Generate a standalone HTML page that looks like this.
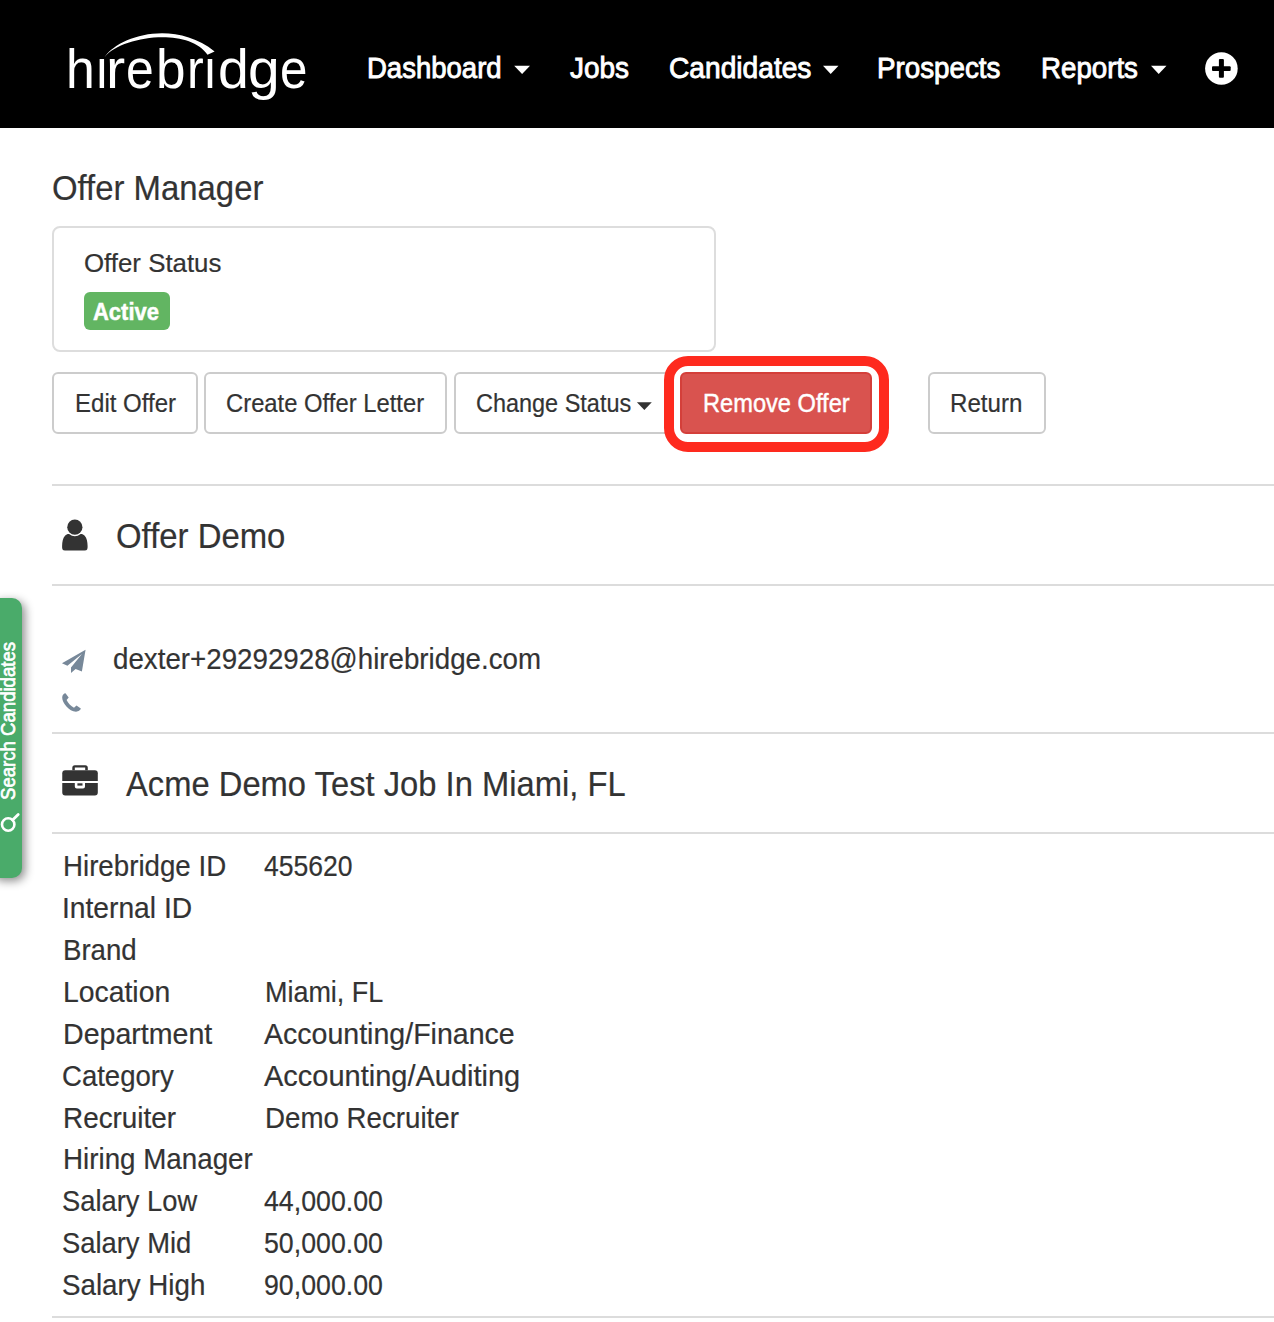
<!DOCTYPE html>
<html>
<head>
<meta charset="utf-8">
<title>Offer Manager</title>
<style>
html,body{margin:0;padding:0;background:#fff;width:1274px;height:1322px;overflow:hidden;position:relative;font-family:"Liberation Sans",sans-serif;}
.t{position:absolute;line-height:1;white-space:nowrap;transform-origin:0 0;}
.nav{position:absolute;left:0;top:0;width:1274px;height:128px;background:#000;}
.hr{position:absolute;left:52px;width:1222px;height:2px;background:#dcdcdc;}
.box{position:absolute;box-sizing:border-box;}
svg{position:absolute;overflow:visible;}
</style>
</head>
<body>
<div class="nav"></div>
<!-- logo -->
<div class="t" style="left:65.68px;top:42.00px;font-size:55px;color:#fff;transform:scaleX(0.9400)">h</div>
<div class="t" style="left:94.70px;top:42.00px;font-size:55px;color:#fff;transform:scaleX(0.9000)">&#305;</div>
<div class="t" style="left:106.46px;top:42.00px;font-size:55px;color:#fff;transform:scaleX(1.0467)">r</div>
<div class="t" style="left:125.99px;top:42.00px;font-size:55px;color:#fff;transform:scaleX(0.9074)">e</div>
<div class="t" style="left:155.70px;top:42.00px;font-size:55px;color:#fff;transform:scaleX(0.9654)">b</div>
<div class="t" style="left:186.56px;top:42.00px;font-size:55px;color:#fff;transform:scaleX(0.9133)">r</div>
<div class="t" style="left:203.42px;top:42.00px;font-size:55px;color:#fff;transform:scaleX(0.9167)">&#305;</div>
<div class="t" style="left:217.58px;top:42.00px;font-size:55px;color:#fff;transform:scaleX(1.0080)">d</div>
<div class="t" style="left:248.23px;top:42.00px;font-size:55px;color:#fff;transform:scaleX(1.0360)">g</div>
<div class="t" style="left:279.81px;top:42.00px;font-size:55px;color:#fff;transform:scaleX(0.8963)">e</div>
<svg style="left:0;top:0" width="1274" height="128">
  <path d="M104.5,57.2 C119.7,35.4 174.2,19.4 214.6,51.4 L207.5,54.8 C188.6,27.1 122,35.8 104.5,57.2 Z" fill="#fff"/>
  <!-- carets -->
  <path d="M514.2,65.8 H530 L522.1,74 Z" fill="#fff"/>
  <path d="M823,65.8 H838.5 L830.7,74 Z" fill="#fff"/>
  <path d="M1151,65.8 H1166.5 L1158.7,74 Z" fill="#fff"/>
  <!-- plus circle -->
  <circle cx="1221.4" cy="68.5" r="16.3" fill="#fff"/>
  <rect x="1212" y="66.2" width="18.7" height="4.7" rx="1" fill="#000"/>
  <rect x="1218.9" y="59.1" width="5" height="18.7" rx="1" fill="#000"/>
</svg>

<!-- card -->
<div class="box" style="left:52px;top:226px;width:664px;height:126px;border:2px solid #dddddd;border-radius:8px;"></div>
<div class="box" style="left:84px;top:292px;width:86px;height:38px;background:#62b562;border-radius:6px;"></div>

<!-- buttons -->
<div class="box" style="left:52px;top:372px;width:146px;height:62px;border:2px solid #cccccc;border-radius:6px;"></div>
<div class="box" style="left:204px;top:372px;width:243px;height:62px;border:2px solid #cccccc;border-radius:6px;"></div>
<div class="box" style="left:454px;top:372px;width:225px;height:62px;border:2px solid #cccccc;border-radius:6px;"></div>
<svg style="left:0;top:0" width="1274" height="1322">
  <path d="M636.9,402.3 H651.8 L644.35,409.9 Z" fill="#333"/>
</svg>
<div class="box" style="left:664px;top:356px;width:225px;height:96px;background:#fff;border:10px solid #fe2a1e;border-radius:24px;"></div>
<div class="box" style="left:680px;top:372px;width:192px;height:62px;background:#d9534f;border:2px solid #d43f3a;border-radius:6px;"></div>
<div class="box" style="left:928px;top:372px;width:118px;height:62px;border:2px solid #cccccc;border-radius:6px;"></div>

<!-- hrs -->
<div class="hr" style="top:484px"></div>
<div class="hr" style="top:584px"></div>
<div class="hr" style="top:732px"></div>
<div class="hr" style="top:832px"></div>
<div class="hr" style="top:1316px"></div>

<!-- icons -->
<svg style="left:55px;top:512px" width="40" height="45" viewBox="0 0 40 45">
  <circle cx="19.85" cy="15.2" r="7.6" fill="#333"/>
  <path d="M10,38.6 C7.5,38.6 7,37 7.1,34 C7.2,30 7.8,26 10,23.8 C11.5,22.2 13.5,21.8 14.5,22.3 C16,23.5 17.8,24.3 19.85,24.3 C21.9,24.3 23.7,23.5 25.2,22.3 C26.2,21.8 28.2,22.2 29.7,23.8 C31.9,26 32.5,30 32.6,34 C32.7,37 32.2,38.6 29.7,38.6 Z" fill="#333"/>
</svg>
<svg style="left:55px;top:640px" width="40" height="80" viewBox="0 0 40 80">
  <path d="M30.56,9.68 L6.96,23.3 L12.4,25.7 L26.9,13.9 L16,27.5 L16,33 L20.6,29 L26.9,31.5 Z" fill="#778899"/>
  <path d="M10.5,53.3 C9,53.3 7.2,55 7.2,57.5 C7.2,63 14,71.5 21,71.7 C23.5,71.7 25.8,70 25.8,68.6 L21.5,65.4 L19,67.8 C16,66.5 13,63 11.6,60.1 L13.7,57.6 Z" fill="#778899"/>
</svg>
<svg style="left:55px;top:755px" width="50" height="50" viewBox="0 0 50 50">
  <path d="M7.26,25.9 V18.3 Q7.26,15.3 10.26,15.3 H39.8 Q42.8,15.3 42.8,18.3 V25.9 Z" fill="#333"/>
  <path d="M17.3,15.3 V12.7 Q17.3,10.2 19.8,10.2 H30.3 Q32.8,10.2 32.8,12.7 V15.3 H30.2 V12.6 H19.8 V15.3 Z" fill="#333"/>
  <path d="M7.26,28.06 H19.8 V31.4 Q19.8,33.4 21.8,33.4 H28 Q30,33.4 30,31.4 V28.06 H42.8 V37.6 Q42.8,40.6 39.8,40.6 H10.26 Q7.26,40.6 7.26,37.6 Z" fill="#333"/>
  <rect x="22.4" y="28.3" width="5.1" height="2.3" fill="#333"/>
</svg>

<!-- side tab -->
<div class="box" style="left:-10px;top:598px;width:32px;height:280px;background:#4aab6a;border-radius:10px;box-shadow:3px 3px 10px rgba(0,0,0,0.45);"></div>
<div class="t" id="tab" style="left:-3.4px;top:800px;font-size:21px;font-weight:400;color:#fff;transform:rotate(-90deg) scaleX(0.885);transform-origin:0 0;-webkit-text-stroke:0.7px #fff;">Search Candidates</div>
<svg style="left:0;top:0" width="40" height="1322">
  <circle cx="8.2" cy="824.5" r="6.2" fill="none" stroke="#fff" stroke-width="2.6"/>
  <path d="M12.6,820.1 L18.2,814.5" stroke="#fff" stroke-width="2.8" stroke-linecap="round"/>
</svg>

<div class="t" style="left:366.78px;top:52.60px;font-size:29.8px;font-weight:400;color:#fff;transform:scaleX(0.9236);-webkit-text-stroke:0.9px #fff">Dashboard</div>
<div class="t" style="left:570.00px;top:52.60px;font-size:29.8px;font-weight:400;color:#fff;transform:scaleX(0.9365);-webkit-text-stroke:0.9px #fff">Jobs</div>
<div class="t" style="left:669.06px;top:52.60px;font-size:29.8px;font-weight:400;color:#fff;transform:scaleX(0.9450);-webkit-text-stroke:0.9px #fff">Candidates</div>
<div class="t" style="left:877.47px;top:52.60px;font-size:29.8px;font-weight:400;color:#fff;transform:scaleX(0.9313);-webkit-text-stroke:0.9px #fff">Prospects</div>
<div class="t" style="left:1041.37px;top:52.60px;font-size:29.8px;font-weight:400;color:#fff;transform:scaleX(0.9291);-webkit-text-stroke:0.9px #fff">Reports</div>
<div class="t" style="left:52.35px;top:170.60px;font-size:34.5px;font-weight:400;color:#333;transform:scaleX(0.9529);-webkit-text-stroke:0.2px #333">Offer Manager</div>
<div class="t" style="left:84.02px;top:249.90px;font-size:26.3px;font-weight:400;color:#333;transform:scaleX(0.9827);-webkit-text-stroke:0.2px #333">Offer Status</div>
<div class="t" style="left:93.40px;top:300.20px;font-size:24px;font-weight:700;color:#fff;transform:scaleX(0.9153);-webkit-text-stroke:0.5px #fff">Active</div>
<div class="t" style="left:74.89px;top:389.90px;font-size:26.3px;font-weight:400;color:#333;transform:scaleX(0.9136);-webkit-text-stroke:0.2px #333">Edit Offer</div>
<div class="t" style="left:226.39px;top:389.90px;font-size:26.3px;font-weight:400;color:#333;transform:scaleX(0.9055);-webkit-text-stroke:0.2px #333">Create Offer Letter</div>
<div class="t" style="left:475.51px;top:389.90px;font-size:26.3px;font-weight:400;color:#333;transform:scaleX(0.8919);-webkit-text-stroke:0.2px #333">Change Status</div>
<div class="t" style="left:702.80px;top:389.90px;font-size:26.3px;font-weight:400;color:#fff;transform:scaleX(0.8988);-webkit-text-stroke:0.45px #fff">Remove Offer</div>
<div class="t" style="left:950.48px;top:389.90px;font-size:26.3px;font-weight:400;color:#333;transform:scaleX(0.9182);-webkit-text-stroke:0.2px #333">Return</div>
<div class="t" style="left:115.55px;top:518.60px;font-size:34.5px;font-weight:400;color:#333;transform:scaleX(0.9534);-webkit-text-stroke:0.2px #333">Offer Demo</div>
<div class="t" style="left:113.30px;top:645.40px;font-size:28.7px;font-weight:400;color:#333;transform:scaleX(0.9663);-webkit-text-stroke:0.2px #333">dexter+29292928@hirebridge.com</div>
<div class="t" style="left:125.50px;top:766.50px;font-size:34.5px;font-weight:400;color:#333;transform:scaleX(0.9487);-webkit-text-stroke:0.2px #333">Acme Demo Test Job In Miami, FL</div>
<div class="t" style="left:62.93px;top:851.80px;font-size:28.7px;font-weight:400;color:#333;transform:scaleX(0.9653);-webkit-text-stroke:0.2px #333">Hirebridge ID</div>
<div class="t" style="left:264.20px;top:851.80px;font-size:28.7px;font-weight:400;color:#333;transform:scaleX(0.9253);-webkit-text-stroke:0.2px #333">455620</div>
<div class="t" style="left:61.63px;top:893.75px;font-size:28.7px;font-weight:400;color:#333;transform:scaleX(0.9831);-webkit-text-stroke:0.2px #333">Internal ID</div>
<div class="t" style="left:62.64px;top:935.70px;font-size:28.7px;font-weight:400;color:#333;transform:scaleX(0.9627);-webkit-text-stroke:0.2px #333">Brand</div>
<div class="t" style="left:62.61px;top:977.65px;font-size:28.7px;font-weight:400;color:#333;transform:scaleX(0.9879);-webkit-text-stroke:0.2px #333">Location</div>
<div class="t" style="left:264.56px;top:977.65px;font-size:28.7px;font-weight:400;color:#333;transform:scaleX(0.9392);-webkit-text-stroke:0.2px #333">Miami, FL</div>
<div class="t" style="left:62.60px;top:1019.60px;font-size:28.7px;font-weight:400;color:#333;transform:scaleX(0.9960);-webkit-text-stroke:0.2px #333">Department</div>
<div class="t" style="left:264.20px;top:1019.60px;font-size:28.7px;font-weight:400;color:#333;transform:scaleX(0.9948);-webkit-text-stroke:0.2px #333">Accounting/Finance</div>
<div class="t" style="left:61.84px;top:1061.55px;font-size:28.7px;font-weight:400;color:#333;transform:scaleX(0.9595);-webkit-text-stroke:0.2px #333">Category</div>
<div class="t" style="left:264.20px;top:1061.55px;font-size:28.7px;font-weight:400;color:#333;transform:scaleX(1.0103);-webkit-text-stroke:0.2px #333">Accounting/Auditing</div>
<div class="t" style="left:63.03px;top:1103.50px;font-size:28.7px;font-weight:400;color:#333;transform:scaleX(0.9716);-webkit-text-stroke:0.2px #333">Recruiter</div>
<div class="t" style="left:264.73px;top:1103.50px;font-size:28.7px;font-weight:400;color:#333;transform:scaleX(0.9655);-webkit-text-stroke:0.2px #333">Demo Recruiter</div>
<div class="t" style="left:63.03px;top:1145.45px;font-size:28.7px;font-weight:400;color:#333;transform:scaleX(0.9677);-webkit-text-stroke:0.2px #333">Hiring Manager</div>
<div class="t" style="left:61.85px;top:1187.40px;font-size:28.7px;font-weight:400;color:#333;transform:scaleX(0.9521);-webkit-text-stroke:0.2px #333">Salary Low</div>
<div class="t" style="left:264.00px;top:1187.40px;font-size:28.7px;font-weight:400;color:#333;transform:scaleX(0.9323);-webkit-text-stroke:0.2px #333">44,000.00</div>
<div class="t" style="left:61.85px;top:1229.35px;font-size:28.7px;font-weight:400;color:#333;transform:scaleX(0.9537);-webkit-text-stroke:0.2px #333">Salary Mid</div>
<div class="t" style="left:264.07px;top:1229.35px;font-size:28.7px;font-weight:400;color:#333;transform:scaleX(0.9317);-webkit-text-stroke:0.2px #333">50,000.00</div>
<div class="t" style="left:61.83px;top:1271.30px;font-size:28.7px;font-weight:400;color:#333;transform:scaleX(0.9664);-webkit-text-stroke:0.2px #333">Salary High</div>
<div class="t" style="left:264.07px;top:1271.30px;font-size:28.7px;font-weight:400;color:#333;transform:scaleX(0.9317);-webkit-text-stroke:0.2px #333">90,000.00</div>
</body>
</html>
